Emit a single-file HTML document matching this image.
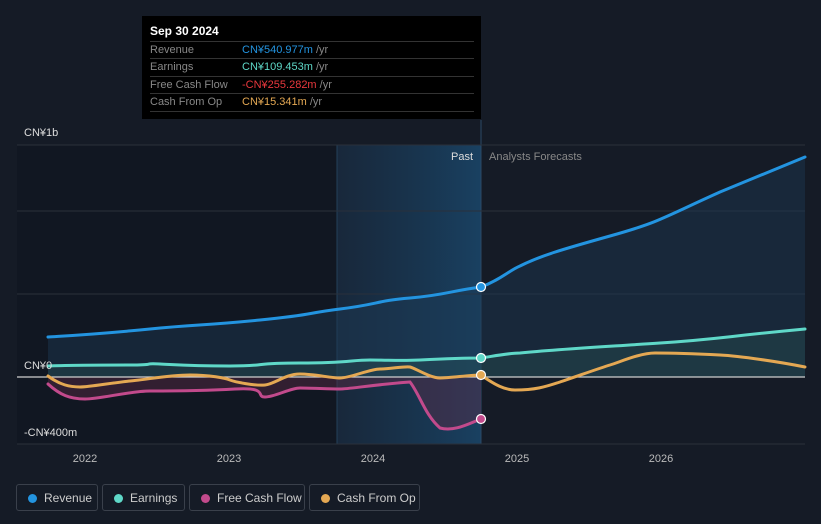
<!DOCTYPE html>
<html><head><meta charset="utf-8"><style>
body{margin:0;width:821px;height:524px;background:#151b26;font-family:"Liberation Sans",sans-serif;overflow:hidden;position:relative}
.tt{position:absolute;left:142px;top:16px;width:339px;height:103px;background:#000;}
.tt .h{position:absolute;left:8px;top:8px;color:#fff;font-size:12px;font-weight:bold}
.row{position:absolute;left:8px;width:324px;height:17px;border-top:1px solid #333;font-size:11px;color:#888;line-height:17px}
.row span{position:absolute;left:92px}
.lg{position:absolute;top:484px;height:27px;border:1px solid #3a404b;border-radius:3px;color:#ccc;font-size:12px;line-height:27px;box-sizing:border-box}
.lg i{position:absolute;left:11px;top:9px;width:9px;height:9px;border-radius:50%}
.lg b{font-weight:normal;position:absolute;left:27px}
</style></head><body>
<svg width="821" height="524" style="position:absolute;left:0;top:0">
<defs>
<linearGradient id="pg" x1="0" x2="1" y1="0" y2="0"><stop offset="0" stop-color="#1a3550" stop-opacity=".5"/><stop offset="1" stop-color="#1a4a70" stop-opacity=".8"/></linearGradient>
</defs>
<rect x="337" y="145" width="144" height="299" fill="url(#pg)"/>
<rect x="17" y="145" width="320" height="299" fill="#111722"/>
<line x1="337" y1="145" x2="337" y2="444" stroke="#24405a"/>
<line x1="481" y1="120" x2="481" y2="444" stroke="#2a4a66"/>
<g stroke="#2a303b"><line x1="17" y1="145" x2="805" y2="145"/><line x1="17" y1="211" x2="805" y2="211"/><line x1="17" y1="294" x2="805" y2="294"/><line x1="17" y1="444" x2="805" y2="444"/></g>
<path d="M48,337 C80,335 100,334 150,329 S200,326 260,320 S300,314 340,309 S375,301 410,298 S450,291 481,287 C500,280 510,270 520,266 C540,256 560,250 610,236 S660,219 720,192 L805,157 L805,377 L48,377Z" fill="#1d3a55" opacity=".45"/>
<path d="M48,366 L100,365 150,364 200,366 250,364 300,363 370,360 410,361 481,358 520,353 600,348 660,343 720,337 805,329 L805,377 L48,377Z" fill="#2a5555" opacity=".35"/>
<path d="M48,384 C60,395 70,399 85,399 S130,391 150,391 S200,391 235,389 S255,397 265,397 S290,388 300,388 S330,389 340,389 S370,385 410,382 C420,395 425,415 440,428 C455,432 470,423 481,419 L481,377 L48,377Z" fill="#5a2a45" opacity=".45"/>
<line x1="17" y1="377" x2="805" y2="377" stroke="#cfcfcf" stroke-width="1.2"/>
<g fill="none" stroke-width="3" stroke-linecap="round">
<path d="M48,337 C80,335 100,334 150,329 S200,326 260,320 S300,314 340,309 S375,301 410,298 S450,291 481,287 C500,280 510,270 520,266 C540,256 560,250 610,236 S660,219 720,192 L805,157" stroke="#2394e0"/>
<path d="M48,366 C70,365 100,365 130,365 S140,363 160,364 S190,366 230,366 S250,363 300,363 S350,360 370,360 S400,361 420,360 S470,358 481,358 C500,355 510,353 520,353 C560,349 600,347 660,343 S720,337 805,329" stroke="#5fd8c8"/>
<path d="M48,384 C60,395 70,399 85,399 S130,391 150,391 S200,391 235,389 S255,397 265,397 S290,388 300,388 S330,389 340,389 S370,385 410,382 C420,395 425,415 440,428 C455,432 470,423 481,419" stroke="#c24a8c"/>
<path d="M48,376 C60,385 70,387 80,387 S110,383 130,381 S170,375 190,375 S225,378 230,380 S255,386 265,385 S285,374 300,374 S330,378 340,378 S370,369 380,369 S405,366 410,367 S430,378 440,378 S470,375 481,375 C495,385 505,390 515,390 C535,390 545,387 560,382 S600,368 610,365 S640,353 655,353 S700,354 720,355 S780,362 805,367" stroke="#e4a853"/>
</g>
<g stroke="#fff" stroke-width="1.2"><circle cx="481" cy="287" r="4.5" fill="#2394e0"/><circle cx="481" cy="358" r="4.5" fill="#5fd8c8"/><circle cx="481" cy="375" r="4.5" fill="#e4a853"/><circle cx="481" cy="419" r="4.5" fill="#c24a8c"/></g>
<g font-family="Liberation Sans" font-size="11" fill="#ddd">
<text x="24" y="136">CN¥1b</text><text x="24" y="369">CN¥0</text><text x="24" y="436">-CN¥400m</text>
<text x="473" y="160" text-anchor="end" fill="#ddd">Past</text><text x="489" y="160" fill="#888">Analysts Forecasts</text>
<g fill="#bbb" text-anchor="middle"><text x="85" y="462">2022</text><text x="229" y="462">2023</text><text x="373" y="462">2024</text><text x="517" y="462">2025</text><text x="661" y="462">2026</text></g>
</g>
</svg>
<div class="tt"><div class="h">Sep 30 2024</div>
<div class="row" style="top:25px">Revenue<span style="color:#2394e0">CN¥540.977m <em style="font-style:normal;color:#888">/yr</em></span></div>
<div class="row" style="top:42px">Earnings<span style="color:#5fd8c8">CN¥109.453m <em style="font-style:normal;color:#888">/yr</em></span></div>
<div class="row" style="top:60px">Free Cash Flow<span style="color:#e8383d">-CN¥255.282m <em style="font-style:normal;color:#888">/yr</em></span></div>
<div class="row" style="top:77px;border-bottom:1px solid #333">Cash From Op<span style="color:#e4a853">CN¥15.341m <em style="font-style:normal;color:#888">/yr</em></span></div>
</div>
<div class="lg" style="left:16px;width:82px"><i style="background:#2394e0"></i><b>Revenue</b></div>
<div class="lg" style="left:102px;width:83px"><i style="background:#5fd8c8"></i><b>Earnings</b></div>
<div class="lg" style="left:189px;width:116px"><i style="background:#c24a8c"></i><b>Free Cash Flow</b></div>
<div class="lg" style="left:309px;width:111px"><i style="background:#e4a853"></i><b>Cash From Op</b></div>
</body></html>
